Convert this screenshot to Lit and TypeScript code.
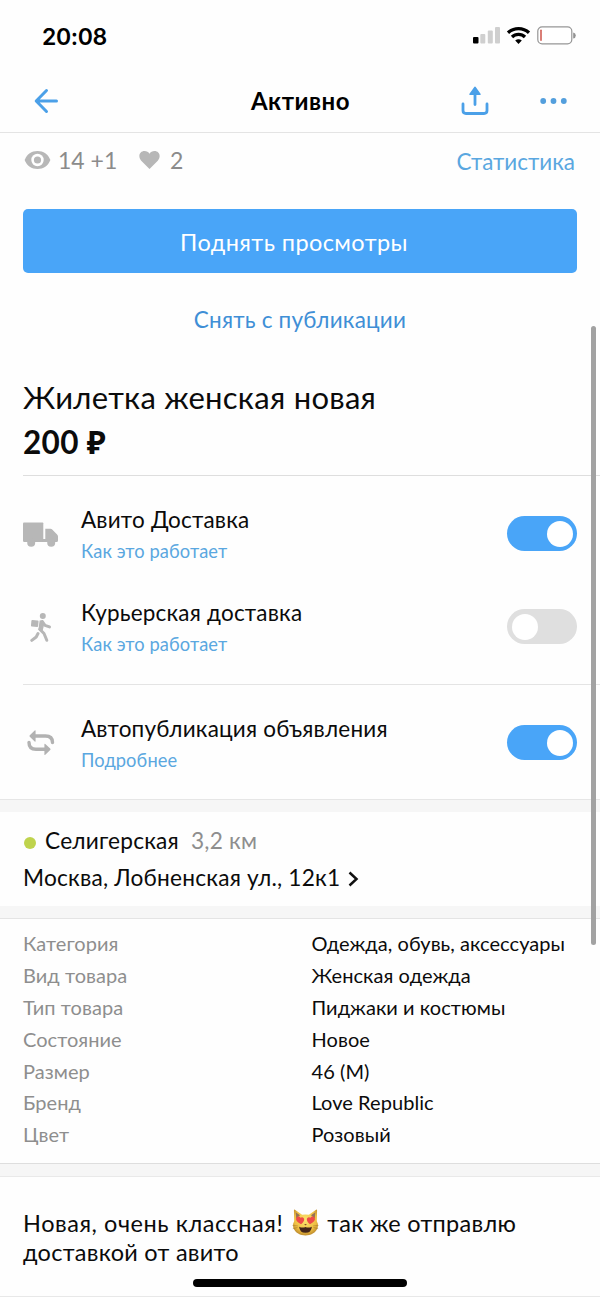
import { LitElement, html, css, svg } from "lit";
import { customElement, property } from "lit/decorators.js";

@customElement("toggle-switch")
class ToggleSwitch extends LitElement {
  @property({ type: Boolean, reflect: true }) on = false;
  static styles = css`
    :host { display: flex; box-sizing: border-box; width: 70px; height: 35px; padding: 4.5px; border-radius: 18px; background: #dfdfdf; }
    :host([on]) { background: #49a5f8; justify-content: flex-end; }
    .knob { width: 26px; height: 26px; border-radius: 50%; background: #fff; }
  `;
  render() { return html`<div class="knob"></div>`; }
}

const truck = svg`<svg width="36" height="26" viewBox="0 0 36 26" fill="#b7b7b7"><path d="M1 .5H19.500q.8 0 .8.8V20H1.200q-1.200 0-1.200-1.200V1.500Q0 .5 1 .5Z"/><path d="M22.300 6.700h5.200q1 0 1.700.7l4.900 5.200q.9.900.9 2V18.500q0 1.500-1.500 1.500H19.800v-3h2.500V6.700Z"/><circle cx="8.200" cy="20.800" r="4"/><circle cx="28.200" cy="20.800" r="4"/></svg>`;
const courier = svg`<svg width="22" height="30" viewBox="0 0 22 30"><g fill="#b7b7b7"><circle cx="12.800" cy="3" r="3"/><rect x="1.200" y="7.200" width="7.200" height="6.600" rx="1" transform="rotate(5 5 10)"/><path d="M9.600 7.500 13 7l1.300 4-1.600 6.500-4.300-.500Z"/></g><g fill="none" stroke="#b7b7b7" stroke-width="3" stroke-linecap="round" stroke-linejoin="round"><path d="M12.500 8.800 15 12.300l4.500 1.600"/><path d="M9.800 16.200 14 20.500 16.800 27.300"/><path d="M8 20.500 6.200 24 1.800 27.400"/></g></svg>`;
const repeat = svg`<svg width="28" height="28" viewBox="0 0 28 28"><g fill="none" stroke="#b2b2b2" stroke-width="3.400" stroke-linecap="round"><path d="M8 7h10.500q7 0 7 6.500"/><path d="M2 13.500q0 6.800 7 6.800H18.500"/></g><path d="M8.600 2v10q0 1-.9.400L2.800 7.800q-.8-.8 0-1.600L7.700 1.500q.9-.6.9.5ZM17.400 15.400v10q0 1 .9.400l4.900-4.700q.8-.8 0-1.600l-4.900-4.600q-.9-.6-.9.500Z" fill="#b2b2b2"/></svg>`;
const cat = svg`<svg class="cat" width="27" height="29" viewBox="0 0 28 29"><defs><radialGradient id="fur" cx=".5" cy=".4" r=".62"><stop offset="0" stop-color="#fbe36e"/><stop offset=".7" stop-color="#efbf42"/><stop offset="1" stop-color="#b9862b"/></radialGradient></defs><path d="M3 1.200Q2 .5 2 2.200L2.300 13Q.5 16 1.200 19.500C3 25.500 9 28 14 28s11-2.500 12.800-8.500Q27.500 16 25.700 13L26 2.200q0-1.700-1-1L17.500 6.500a17 17 0 0 0-7 0Z" fill="url(#fur)"/><path d="M3.800 3.800 8.300 7 4.400 10.300ZM24.200 3.800 19.700 7l3.900 3.300Z" fill="#967257"/><path d="M9.400 16.300C5.500 14.500 3.600 12.500 4.300 10.200c.8-2.300 3.500-2.300 4.500-.5 1.600-1.400 4-.4 3.800 1.900-.2 1.900-1.600 3.500-3.200 4.700ZM18.600 16.300c3.900-1.800 5.800-3.800 5.100-6.100-.8-2.300-3.500-2.300-4.500-.5-1.600-1.400-4-.4-3.800 1.900.2 1.900 1.600 3.500 3.200 4.700Z" fill="#ee4b48"/><path d="M12.600 16h2.800L14 17.500Z" fill="#8a5128"/><path d="M7.400 18.800q3.300 1.800 6.600.4 3.300 1.400 6.600-.4Q20 25.200 14 25.200T7.400 18.800Z" fill="#43251a"/><path d="M.5 17.500 6 18M.8 21l5-1.400M27.500 17.500 22 18M27.200 21l-5-1.400" stroke="#9b7027" stroke-width=".5"/></svg>`;

@customElement("app-root")
class AppRoot extends LitElement {
  static styles = css`
    :host { display: block; position: relative; width: 600px; height: 1297px; overflow: hidden; background: #fefefe; color: #0b0b0b; font-family: Lato, "Noto Sans", sans-serif; box-sizing: border-box; }
    * { box-sizing: border-box; }
    svg { display: block; flex: none; }
    .status { height: 70px; display: flex; align-items: center; padding: 2px 24px 0 42px; }
    .clock { font: 600 23px/30px Inter, sans-serif; letter-spacing: -.35px; color: #000; flex: 1; padding-top: 1px; }
    .nav { height: 63px; border-bottom: 1px solid #e4e4e4; display: grid; grid-template-columns: 200px 200px 200px; align-items: center; }
    .nav .title { text-align: center; font-size: 24px; font-weight: 700; line-height: 30px; letter-spacing: .5px; color: #000; padding-left: 1px; }
    .back { padding-left: 34px; }
    .actions { display: flex; justify-content: flex-end; align-items: center; gap: 51px; padding-right: 32px; }
    .stats { height: 76px; padding: 13px 25px 0 24px; display: flex; align-items: flex-start; color: #8b8b8b; font-size: 23px; line-height: 30px; }
    .stats svg { margin-top: 4px; }
    .stats span { margin-top: -1px; }
    .views { margin-left: 7px; width: 81px; }
    .likes { margin-left: 10px; flex: 1; }
    .stats .link { line-height: 33px; font-size: 22.450px; }
    .link { color: #5aa7e0; }
    .cta { display: block; border: 0; margin: 0 23px; width: 554px; height: 64px; padding: 1px 12px 0 0; border-radius: 5px; background: #49a5f8; color: #fff; font: 400 23.500px/30px Lato, sans-serif; letter-spacing: .42px; }
    .unpublish { height: 98px; padding-top: 32px; text-align: center; font-size: 22.500px; line-height: 30px; letter-spacing: .2px; color: #3f8fd6; }
    .head { margin-left: 23px; height: 105px; border-bottom: 1px solid #dedede; padding-top: 6px; }
    .name { font-size: 31px; line-height: 40px; letter-spacing: .28px; }
    .price { font-size: 31.500px; line-height: 51px; font-weight: 700; letter-spacing: .3px; }
    .opt { display: grid; grid-template-columns: 58px 1fr 70px; padding: 0 23px; height: 93px; align-items: start; }
    .opt .icon { display: flex; justify-content: center; align-items: center; width: 35px; height: 35px; margin-top: 14px; }
    .opt toggle-switch { margin-top: 13px; }
    .opt .l { font-size: 22.500px; line-height: 33px; letter-spacing: .2px; }
    .opt .s { font-size: 18.300px; line-height: 30px; letter-spacing: .1px; }
    .delivery { padding-top: 27px; height: 208px; }
    .rule { height: 1px; background: #e4e4e4; margin-left: 23px; }
    .auto { padding-top: 27px; height: 114px; }
    .auto .icon { margin-top: 13px; }
    .band { height: 13px; background: #f6f6f6; border-top: 1px solid #e6e6e6; }
    .geo { height: 94px; padding: 13px 24px 0 23px; font-size: 22.700px; letter-spacing: .2px; }
    .metro { display: flex; align-items: center; line-height: 32px; }
    .dot { width: 12px; height: 12px; border-radius: 50%; background: #bfd34d; margin: 3px 9px 0 1px; }
    .km { color: #8e8e8e; margin-left: 12px; }
    .addr { display: flex; align-items: center; line-height: 41px; gap: 8px; }
    .addr svg { margin-top: 2px; }
    .band.low { height: 13px; border-top: 0; border-bottom: 1px solid #e4e4e4; }
    .attrs { height: 244px; margin: 0; padding: 8px 24px 0 23px; display: grid; grid-template-columns: 288.500px 1fr; grid-auto-rows: 31.900px; font-size: 20px; line-height: 32px; letter-spacing: .06px; }
    .attrs dt { color: #8e8e8e; }
    .attrs dd { margin: 0; }
    .band.last { height: 14px; border-bottom: 1px solid #e9e9e9; border-top-color: #dedede; }
    .desc { padding: 32px 24px 0 23px; font-size: 23.500px; line-height: 28.500px; letter-spacing: .28px; height: 119px; }
    .line { display: flex; align-items: center; }
    .line .lead { letter-spacing: .55px; }
    .cat { margin: -1px 8px 0 9px; }
    .scroll { position: absolute; left: 591px; top: 326px; width: 5px; height: 619px; border-radius: 3px; background: #a2a2a2; }
    .home { position: absolute; left: 193px; top: 1279px; width: 214px; height: 8px; border-radius: 4px; background: #000; }
    .end { height: 1px; background: #e8e8e8; }
  `;

  option(icon: unknown, label: string, sub: string, on: boolean) {
    return html`<div class="opt"><div class="icon">${icon}</div>
      <div><div class="l">${label}</div><div class="s link">${sub}</div></div>
      <toggle-switch ?on=${on}></toggle-switch></div>`;
  }

  render() {
    const attrs = [["Категория", "Одежда, обувь, аксессуары"], ["Вид товара", "Женская одежда"], ["Тип товара", "Пиджаки и костюмы"], ["Состояние", "Новое"], ["Размер", "46 (M)"], ["Бренд", "Love Republic"], ["Цвет", "Розовый"]];
    return html`
      <div class="status"><span class="clock">20:08</span>
        <svg width="104" height="20" viewBox="0 0 104 20">
          <rect x="1" y="11" width="5.500" height="6.500" rx="1" fill="#000"/><g fill="#cfcfcf"><rect x="8.300" y="8" width="5" height="9.500" rx="1"/><rect x="15.800" y="4.500" width="5" height="13" rx="1"/><rect x="23" y="1" width="5" height="16.500" rx="1"/></g>
          <g fill="none" stroke="#000" stroke-width="3.300"><path d="M36 6.700a15.300 15.300 0 0 1 21 0"/><path d="M40 11a9.300 9.300 0 0 1 13 0"/></g><path d="M43.200 14.500q3.300-2.700 6.600 0L46.500 18Z"/>
          <rect x="65.800" y=".8" width="34" height="17" rx="4.300" fill="#fff" stroke="#969696" stroke-width="1.200"/><rect x="68.200" y="3.500" width="1.600" height="11.500" rx=".8" fill="#d15e55"/><path d="M101.200 6.500q2.600.5 2.600 3t-2.600 3Z" fill="#929292"/>
        </svg>
      </div>
      <div class="nav"><div class="back"><svg width="26" height="26" viewBox="0 0 26 26" fill="none" stroke="#4ba0e8" stroke-width="3" stroke-linecap="round" stroke-linejoin="round"><path d="M12.500 2.500 2.200 13 12.500 23.500M2.800 13H22.500"/></svg></div>
        <div class="title">Активно</div>
        <div class="actions"><svg width="28" height="30" viewBox="0 0 28 30" fill="none" stroke="#4ba0e8" stroke-width="2.800" stroke-linecap="round" stroke-linejoin="round"><path d="M2 18V24.500q0 3 3 3H23q3 0 3-3V18M14 5v13.500"/><path d="M14 1.500 9.200 8.200h9.600Z" fill="#4ba0e8" stroke-width="1.800"/></svg>
          <svg width="28" height="6" viewBox="0 0 28 6" fill="#539fdd"><circle cx="3.200" cy="3" r="2.900"/><circle cx="13.500" cy="3" r="2.900"/><circle cx="23.800" cy="3" r="2.900"/></svg></div></div>
      <div class="stats"><svg width="27" height="20" viewBox="0 0 27 20"><path d="M.6 10C3 4 7.500 1 13.500 1S24 4 26.400 10C24 16 19.500 19 13.500 19S3 16 .6 10Z" fill="#b7b7b7"/><circle cx="13.500" cy="10" r="6.200" fill="#fff"/><circle cx="13.500" cy="10" r="3.600" fill="#b7b7b7"/></svg>
        <span class="views">14 +1</span>
        <svg width="21" height="20" viewBox="0 0 21 20"><path d="M10.500 19 2 10.500C-1.500 6 1 1 5.500 1c2.200 0 4 1 5 2.700C11.500 2 13.300 1 15.500 1 20 1 22.500 6 19 10.500Z" fill="#b7b7b7"/></svg>
        <span class="likes">2</span><span class="link">Статистика</span></div>
      <button class="cta">Поднять просмотры</button>
      <div class="unpublish">Снять с публикации</div>
      <div class="head"><div class="name">Жилетка женская новая</div><div class="price">200 ₽</div></div>
      <div class="delivery">${this.option(truck, "Авито Доставка", "Как это работает", true)}${this.option(courier, "Курьерская доставка", "Как это работает", false)}</div>
      <div class="rule"></div>
      <div class="auto">${this.option(repeat, "Автопубликация объявления", "Подробнее", true)}</div>
      <div class="band"></div>
      <div class="geo"><div class="metro"><span class="dot"></span><span>Селигерская</span><span class="km">3,2 км</span></div>
        <div class="addr"><span>Москва, Лобненская ул., 12к1</span><svg width="11" height="16" viewBox="0 0 11 16" fill="none" stroke="#111" stroke-width="2.500"><path d="M1.500 1.500 8.500 8 1.500 14.500"/></svg></div></div>
      <div class="band low"></div>
      <dl class="attrs">${attrs.map(([k, v]) => html`<dt>${k}</dt><dd>${v}</dd>`)}</dl>
      <div class="band last"></div>
      <div class="desc"><div class="line"><span class="lead">Новая, очень классная!</span>${cat}<span>так же отправлю</span></div><div class="line">доставкой от авито</div></div>
      <div class="end"></div>
      <div class="scroll"></div><div class="home"></div>`;
  }
}
